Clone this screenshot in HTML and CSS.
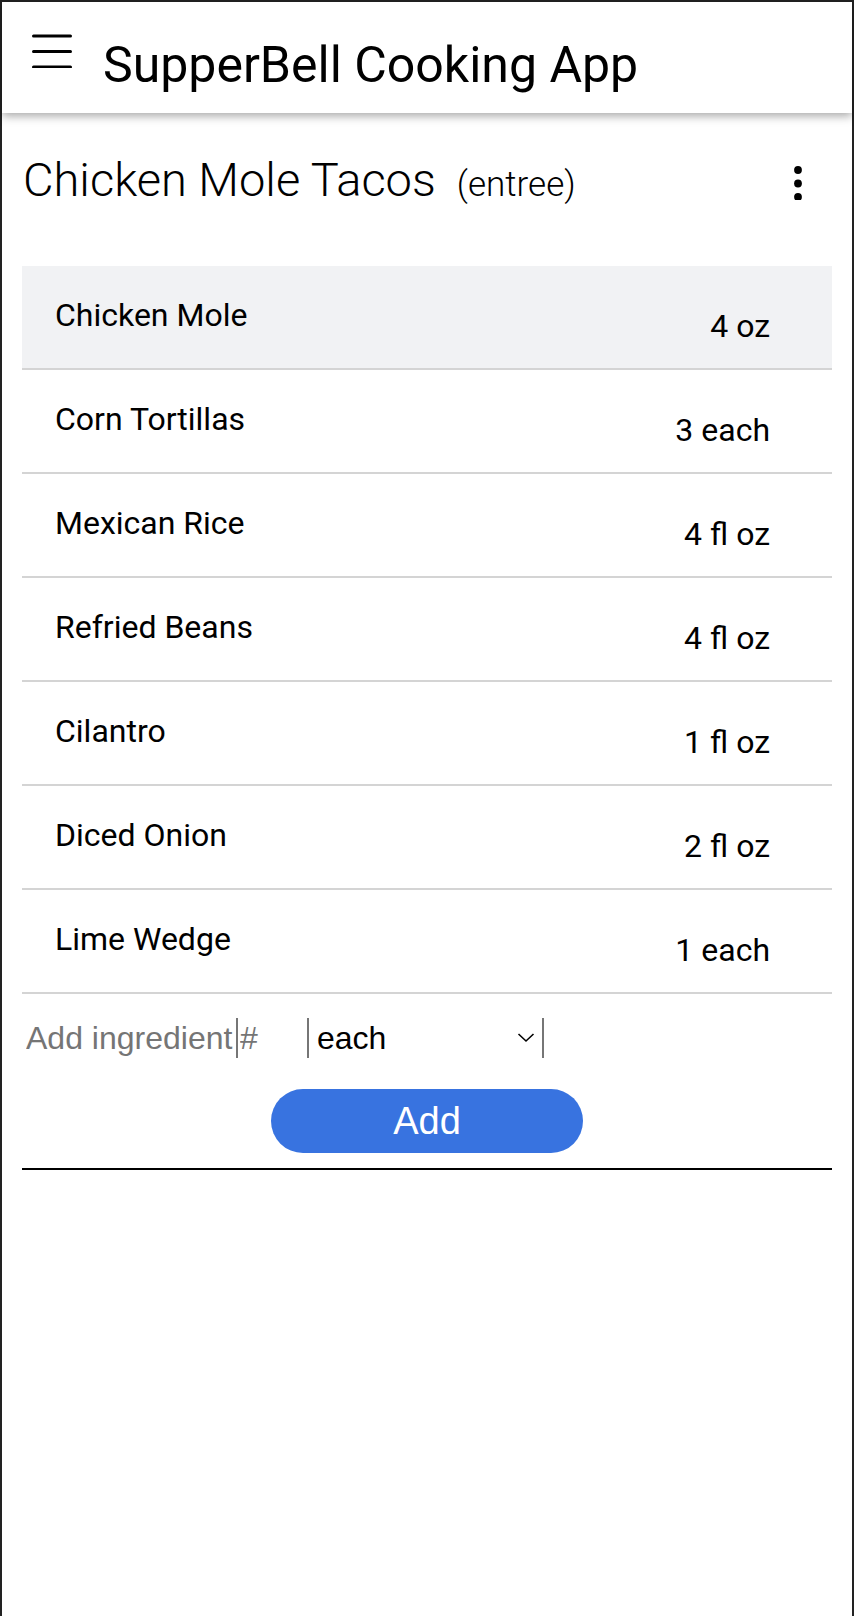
FILE: index.html
```html
<!DOCTYPE html>
<html lang="en">
<head>
<meta charset="utf-8">
<title>SupperBell Cooking App</title>
<link rel="stylesheet" href="styles.css">
</head>
<body>
<div class="app">
  <header class="topbar">
    <svg class="menu-icon" width="40" height="34" viewBox="0 0 40 34" aria-hidden="true">
      <g stroke="#000" stroke-width="3" stroke-linecap="round">
        <line x1="1.5" y1="2" x2="38.5" y2="2"/>
        <line x1="1.5" y1="17.5" x2="38.5" y2="17.5"/>
        <line x1="1.5" y1="33" x2="38.5" y2="33"/>
      </g>
    </svg>
    <h1 class="app-title">SupperBell Cooking App</h1>
  </header>

  <main class="content">
    <div class="recipe-head">
      <div class="recipe-name">
        <h2 class="recipe-title">Chicken Mole Tacos</h2>
        <span class="recipe-type">(entree)</span>
      </div>
      <svg class="kebab" width="24" height="34" viewBox="0 0 24 34" aria-hidden="true">
        <circle cx="12" cy="4" r="3.9"/>
        <circle cx="12" cy="17.5" r="3.9"/>
        <circle cx="12" cy="31" r="3.9"/>
      </svg>
    </div>

    <ul class="ingredients">
      <li class="ingredient selected"><span class="ing-name">Chicken Mole</span><span class="ing-qty">4 oz</span></li>
      <li class="ingredient"><span class="ing-name">Corn Tortillas</span><span class="ing-qty">3 each</span></li>
      <li class="ingredient"><span class="ing-name">Mexican Rice</span><span class="ing-qty">4 fl oz</span></li>
      <li class="ingredient"><span class="ing-name">Refried Beans</span><span class="ing-qty">4 fl oz</span></li>
      <li class="ingredient"><span class="ing-name">Cilantro</span><span class="ing-qty">1 fl oz</span></li>
      <li class="ingredient"><span class="ing-name">Diced Onion</span><span class="ing-qty">2 fl oz</span></li>
      <li class="ingredient"><span class="ing-name">Lime Wedge</span><span class="ing-qty">1 each</span></li>
    </ul>

    <form class="add-form" onsubmit="return false">
      <div class="fields">
        <input class="field field-name" type="text" placeholder="Add ingredient">
        <input class="field field-num" type="text" placeholder="#">
        <div class="select-wrap">
          <select class="field field-unit">
            <option>each</option>
            <option>oz</option>
            <option>fl oz</option>
          </select>
          <svg class="chevron" width="18" height="11" viewBox="0 0 18 11" aria-hidden="true">
            <polyline points="1.5,2 9,9 16.5,2" fill="none" stroke="#000" stroke-width="1.6"/>
          </svg>
        </div>
      </div>
      <div class="actions">
        <button class="add-btn" type="submit">Add</button>
      </div>
    </form>
    <hr class="divider">
  </main>
</div>
</body>
</html>
```

FILE: styles.css
```css
* { box-sizing: border-box; }

html, body {
  margin: 0;
  padding: 0;
  background: #fff;
}

.app {
  min-height: 1616px;
  border: 2px solid #222;
  border-bottom: none;
  font-family: Roboto, "Liberation Sans", sans-serif;
  color: #000;
}

.topbar {
  display: flex;
  align-items: flex-start;
  height: 111px;
  padding: 33px 0 0 30px;
  background: #fff;
  box-shadow: 0 3px 9px rgba(0, 0, 0, 0.35);
  position: relative;
  z-index: 1;
}

.menu-icon {
  display: block;
  margin-top: -1px;
  flex: none;
}

.app-title {
  margin: 0 0 0 31px;
  font-size: 50px;
  font-weight: 400;
  line-height: 60px;
}

.content {
  padding: 40px 20px 0 20px;
}

.recipe-head {
  display: flex;
  align-items: flex-start;
  justify-content: space-between;
}

.recipe-name {
  display: flex;
  align-items: baseline;
  padding-left: 1px;
}

.recipe-title {
  margin: 0;
  font-size: 47px;
  font-weight: 300;
  line-height: 54px;
}

.recipe-type {
  margin-left: 21px;
  font-size: 35px;
  font-weight: 300;
}

.kebab {
  display: block;
  margin: 13px 22px 0 0;
  fill: #000;
}

.ingredients {
  list-style: none;
  margin: 59px 0 0 0;
  padding: 0;
}

.ingredient {
  display: flex;
  justify-content: space-between;
  align-items: flex-start;
  height: 104px;
  border-bottom: 2px solid #d4d4d4;
  padding: 0 62px 0 33px;
  font-size: 32px;
  line-height: 38px;
}

.ingredient.selected {
  background: #f1f2f4;
}

.ing-name {
  padding-top: 30px;
}

.ing-qty {
  padding-top: 41px;
}

.add-form {
  margin-top: 24px;
}

.fields {
  display: flex;
  align-items: stretch;
  height: 40px;
}

.field {
  font-family: "Liberation Sans", Arial, sans-serif;
  font-size: 32px;
  color: #000;
  background: transparent;
  border: none;
  border-right: 2px solid #767676;
  border-radius: 0;
  outline: none;
  margin: 0;
  height: 40px;
}

.field::placeholder {
  color: #757575;
  opacity: 1;
}

.field-name {
  width: 216px;
  padding: 0 0 0 4px;
}

.field-num {
  width: 71px;
  padding: 0 0 0 2px;
}

.select-wrap {
  position: relative;
  width: 235px;
}

.field-unit {
  -webkit-appearance: none;
  appearance: none;
  width: 100%;
  padding: 0 0 0 8px;
}

.chevron {
  position: absolute;
  right: 9px;
  top: 14px;
  pointer-events: none;
}

.actions {
  display: flex;
  justify-content: center;
  margin-top: 31px;
}

.add-btn {
  width: 312px;
  height: 64px;
  border: none;
  border-radius: 32px;
  background: #3873e0;
  color: #fff;
  font-family: "Liberation Sans", Arial, sans-serif;
  font-size: 38px;
  padding: 0;
  cursor: pointer;
}

.divider {
  margin: 15px 0 0 0;
  border: none;
  border-top: 2px solid #000;
  height: 0;
}
```
